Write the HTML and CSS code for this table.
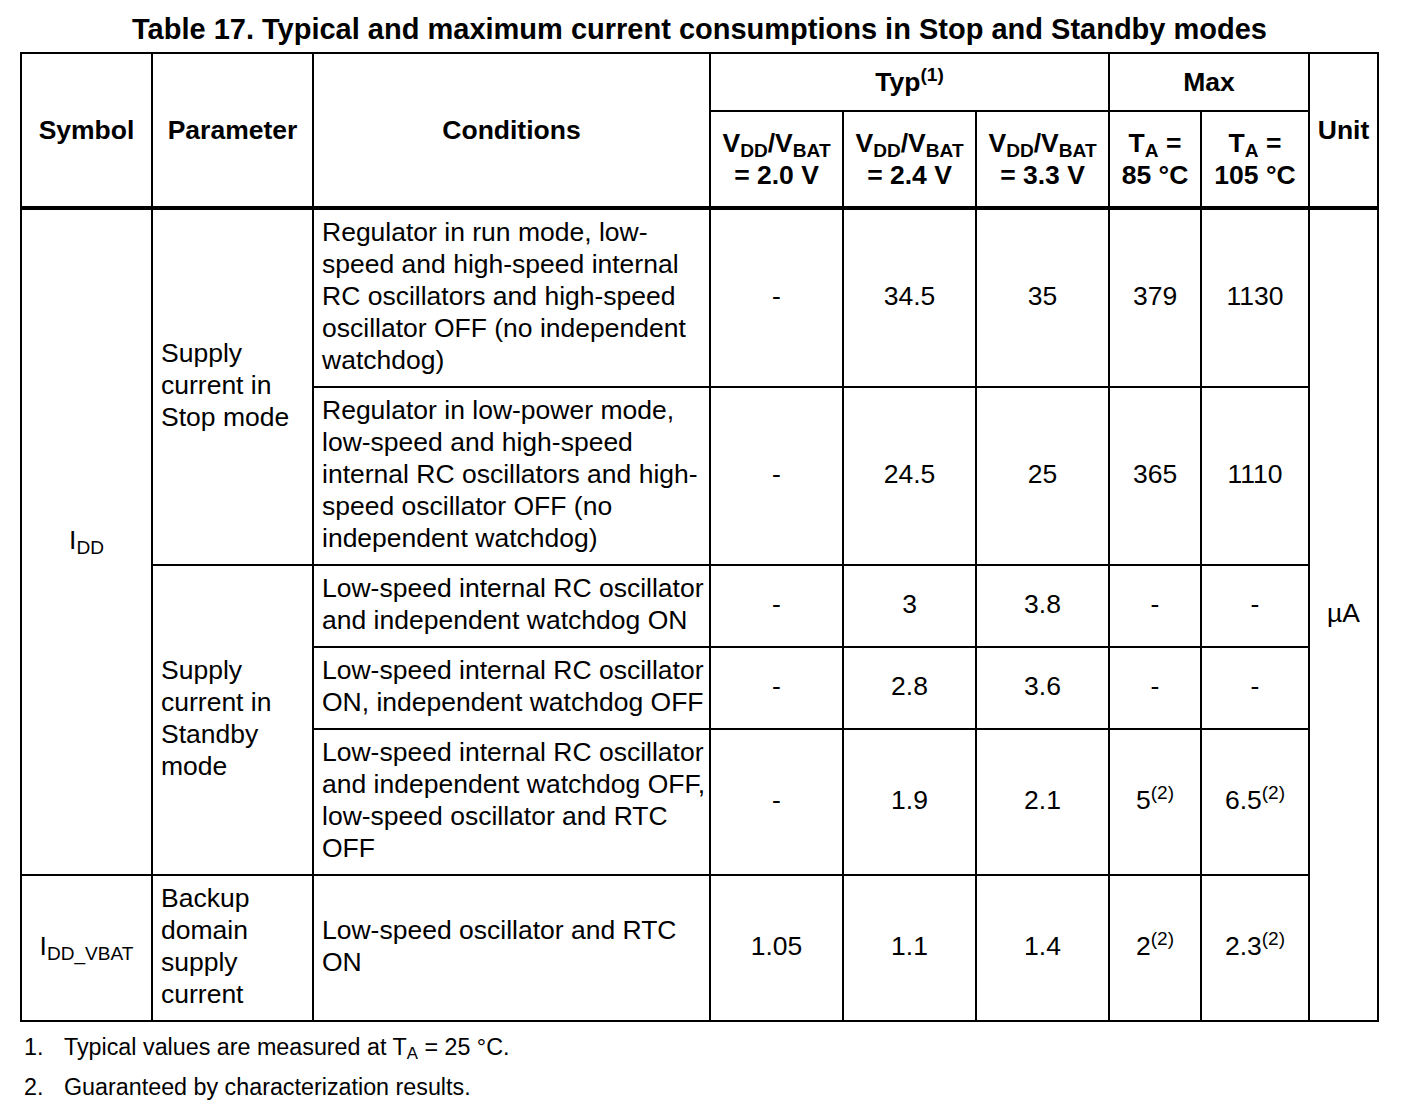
FILE: index.html
```html
<!DOCTYPE html>
<html lang="en">
<head>
  <meta charset="UTF-8">
  <title>Table 17. Typical and maximum current consumptions in Stop and Standby modes</title>
  <link rel="stylesheet" href="styles.css">
</head>
<body>

<div id="datasheet">
  <h1 class="caption">Table 17. Typical and maximum current consumptions in Stop and Standby modes</h1>

  <table class="specs">
    <colgroup>
      <col style="width:131px">
      <col style="width:161px">
      <col style="width:397px">
      <col style="width:133px">
      <col style="width:133px">
      <col style="width:133px">
      <col style="width:92px">
      <col style="width:108px">
      <col style="width:69px">
    </colgroup>
    <thead>
      <tr class="head-top">
        <th rowspan="2">Symbol</th>
        <th rowspan="2">Parameter</th>
        <th rowspan="2">Conditions</th>
        <th colspan="3">Typ<sup>(1)</sup></th>
        <th colspan="2">Max</th>
        <th rowspan="2">Unit</th>
      </tr>
      <tr class="head-sub">
        <th>V<sub>DD</sub>/V<sub>BAT</sub><br>= 2.0 V</th>
        <th>V<sub>DD</sub>/V<sub>BAT</sub><br>= 2.4 V</th>
        <th>V<sub>DD</sub>/V<sub>BAT</sub><br>= 3.3 V</th>
        <th>T<sub>A</sub> =<br>85 °C</th>
        <th>T<sub>A</sub> =<br>105 °C</th>
      </tr>
    </thead>
    <tbody>
      <tr>
        <td class="sym" rowspan="5">I<sub>DD</sub></td>
        <td class="param" rowspan="2">Supply current in Stop mode</td>
        <td class="cond">Regulator in run mode, low-speed and high-speed internal RC oscillators and high-speed oscillator OFF (no independent watchdog)</td>
        <td>-</td>
        <td>34.5</td>
        <td>35</td>
        <td>379</td>
        <td>1130</td>
        <td rowspan="6">µA</td>
      </tr>
      <tr>
        <td class="cond">Regulator in low-power mode, low-speed and high-speed internal RC oscillators and high-speed oscillator OFF (no independent watchdog)</td>
        <td>-</td>
        <td>24.5</td>
        <td>25</td>
        <td>365</td>
        <td>1110</td>
      </tr>
      <tr>
        <td class="param" rowspan="3">Supply current in Standby mode</td>
        <td class="cond">Low-speed internal RC oscillator and independent watchdog ON</td>
        <td>-</td>
        <td>3</td>
        <td>3.8</td>
        <td>-</td>
        <td>-</td>
      </tr>
      <tr>
        <td class="cond">Low-speed internal RC oscillator ON, independent watchdog OFF</td>
        <td>-</td>
        <td>2.8</td>
        <td>3.6</td>
        <td>-</td>
        <td>-</td>
      </tr>
      <tr>
        <td class="cond">Low-speed internal RC oscillator and independent watchdog OFF, low-speed oscillator and RTC OFF</td>
        <td>-</td>
        <td>1.9</td>
        <td>2.1</td>
        <td>5<sup>(2)</sup></td>
        <td>6.5<sup>(2)</sup></td>
      </tr>
      <tr>
        <td class="sym">I<sub>DD_VBAT</sub></td>
        <td class="param">Backup domain supply current</td>
        <td class="cond">Low-speed oscillator and RTC ON</td>
        <td>1.05</td>
        <td>1.1</td>
        <td>1.4</td>
        <td>2<sup>(2)</sup></td>
        <td>2.3<sup>(2)</sup></td>
      </tr>
    </tbody>
  </table>

  <ol class="notes">
    <li><span class="num">1.</span>Typical values are measured at T<sub>A</sub> = 25 °C.</li>
    <li><span class="num">2.</span>Guaranteed by characterization results.</li>
  </ol>
</div>

</body>
</html>
```

FILE: styles.css
```css
body {
  font-family: 'Liberation Sans', Arial, sans-serif;
  background-color: #fff;
  color: #000;
  margin: 0;
  padding: 0;
}

#datasheet {
  padding: 12px 0 0 20px;
  width: 1359px;
}

.caption {
  font-size: 29px;
  font-weight: bold;
  text-align: center;
  margin: 0 0 6px 0;
  line-height: 34px;
}

.specs {
  border-collapse: collapse;
  table-layout: fixed;
  width: 1359px;
  font-size: 26.5px;
  line-height: 32px;
}

.specs th,
.specs td {
  border: 2px solid #000;
  padding: 8px 4px;
  text-align: center;
  vertical-align: middle;
}

.specs td {
  padding-top: 6px;
  padding-bottom: 10px;
}

.specs th {
  font-weight: bold;
}

.head-top th {
  height: 40px;
}

.head-sub th {
  height: 78px;
  line-height: 32px;
}

.specs thead tr:last-child th,
.specs thead th[rowspan] {
  border-bottom: 4px solid #000;
}

.specs td.param,
.specs td.cond {
  text-align: left;
  padding-left: 8px;
  padding-right: 2px;
}

sub,
sup {
  font-size: 0.72em;
  line-height: 0;
}

sub {
  vertical-align: -0.25em;
}

sup {
  vertical-align: 0.5em;
}

.notes {
  list-style: none;
  margin: 12px 0 0 0;
  padding: 0 0 0 4px;
  font-size: 23.3px;
  line-height: 26px;
}

.notes li {
  margin-bottom: 14px;
}

.notes .num {
  display: inline-block;
  width: 40px;
}
```
